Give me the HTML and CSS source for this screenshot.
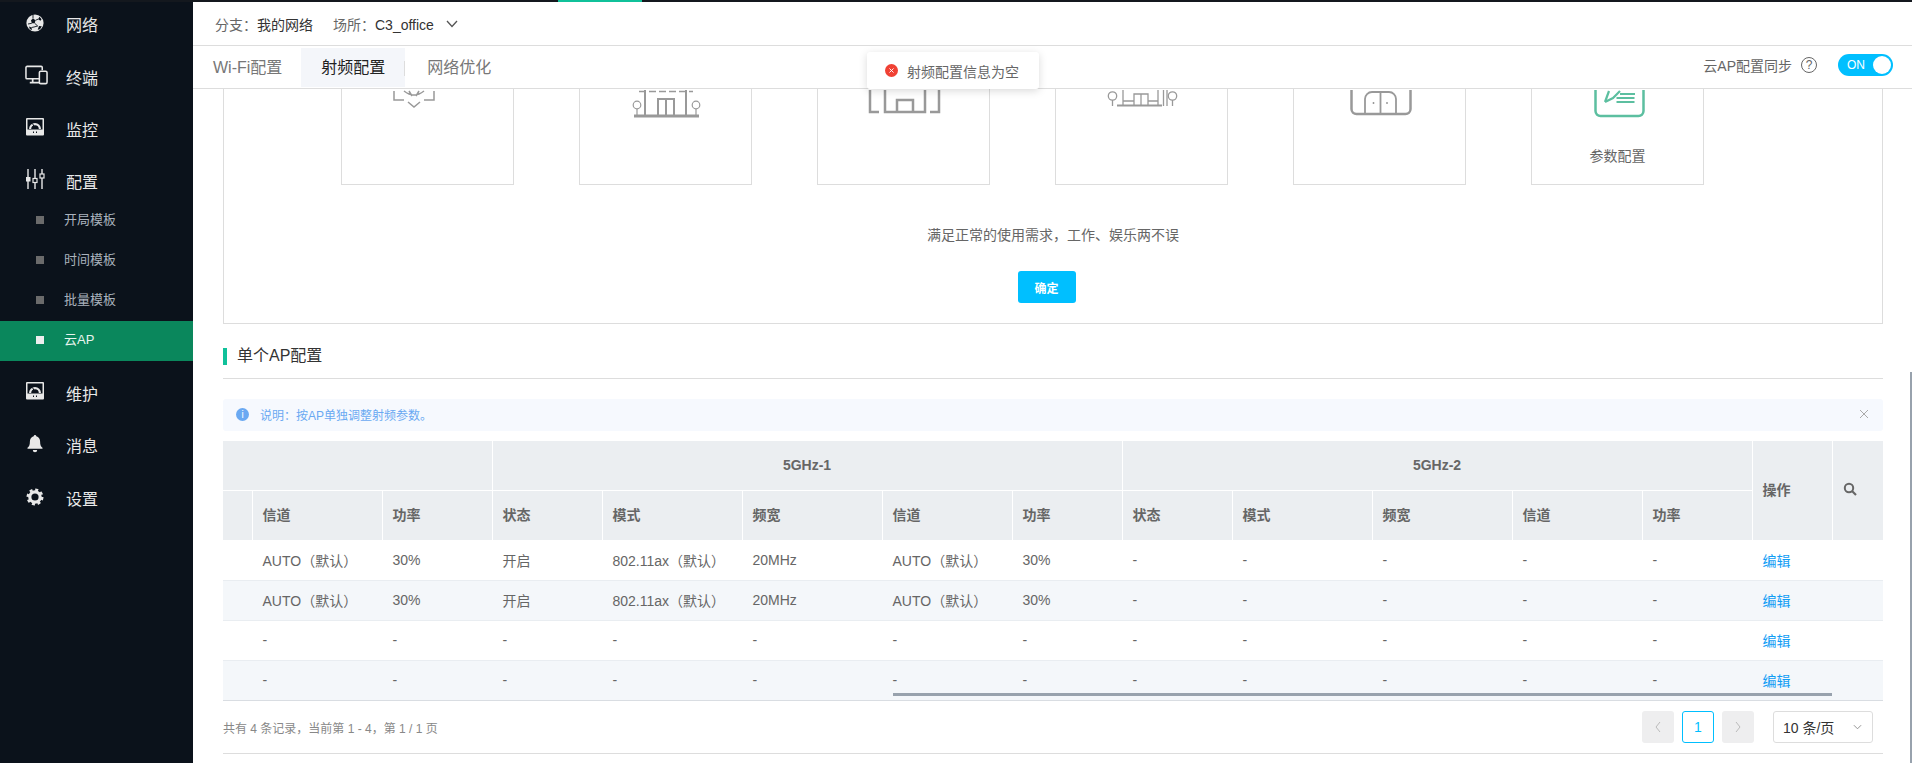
FILE: index.html
```html
<!DOCTYPE html>
<html lang="zh-CN">

<head>
    <meta charset="UTF-8">
    <title>云AP</title>
    <link rel="stylesheet" href="styles.css">
</head>

<body>
    <div class="topline"><span class="topline-mark"></span></div>

    <div class="app">
        <nav class="sidebar">
            <a class="nav-item first">
                <svg class="nav-icon lift-less" viewBox="0 0 18 18"><circle cx="9" cy="9" r="8.600" fill="#e8e8e8"/><path d="M7 4.500l2.500 1.800-.8 3H5.800L5 6.300zM13.500 2.800l2 2.400-1 1.500-2.500-1.500zM13 12l2.800.3-1.800 3-2.300.5zM3 12.500l2.500 1 .5 2.500-2.200-1z" fill="#0b121b"/><path d="M7 4.500V1M9.500 6.300L12 5.200M8.700 9.300l3 2.700M5.800 9.300L2 10M5.500 13.500l2.500-.5 3.700-1" fill="none" stroke="#0b121b" stroke-width=".9"/></svg>
                <span>网络</span>
            </a>
            <a class="nav-item">
                <svg class="nav-icon terminal" viewBox="0 0 24 20"><path d="M17 14H2.200A1.200 1.200 0 0 1 1 12.800V2.200A1.200 1.200 0 0 1 2.200 1h14.600A1.200 1.200 0 0 1 18 2.200V5" fill="none" stroke="#e8e8e8" stroke-width="1.600"/><path d="M8 14v3M5 18h10" stroke="#e8e8e8" stroke-width="1.800"/><rect x="15" y="6" width="8" height="13" rx="1.500" fill="#0b121b" stroke="#e8e8e8" stroke-width="1.600"/></svg>
                <span>终端</span>
            </a>
            <a class="nav-item">
                <svg class="nav-icon" viewBox="0 0 18 18"><use href="#gauge"/></svg>
                <span>监控</span>
            </a>
            <a class="nav-item">
                <svg class="nav-icon sliders" viewBox="0 0 20 20"><path d="M3 0v20M10 0v20M17 0v20" stroke="#e8e8e8" stroke-width="1.400"/><rect x="1" y="8" width="4.500" height="4.500" fill="#e8e8e8"/><rect x="8" y="9.500" width="4" height="4" fill="#0b121b" stroke="#e8e8e8" stroke-width="1.200"/><rect x="15" y="5" width="4" height="4" fill="#0b121b" stroke="#e8e8e8" stroke-width="1.200"/></svg>
                <span>配置</span>
            </a>
            <div class="subnav">
                <a class="sub-item"><i></i>开局模板</a>
                <a class="sub-item"><i></i>时间模板</a>
                <a class="sub-item"><i></i>批量模板</a>
                <a class="sub-item active"><i></i>云AP</a>
            </div>
            <a class="nav-item after-sub">
                <svg class="nav-icon" viewBox="0 0 18 18"><use href="#gauge"/></svg>
                <span>维护</span>
            </a>
            <a class="nav-item">
                <svg class="nav-icon lift-less" viewBox="0 0 18 18"><path d="M9 0a1.300 1.300 0 0 1 1.300 1.200c2.500.6 3.800 2.800 3.800 5.300 0 3.500.7 4.800 2.400 6.300v1h-15v-1c1.700-1.500 2.400-2.800 2.400-6.300 0-2.500 1.300-4.700 3.800-5.300A1.300 1.300 0 0 1 9 0zM6.800 15h4.400a2.200 2.200 0 0 1-4.400 0z" fill="#e8e8e8"/></svg>
                <span>消息</span>
            </a>
            <a class="nav-item">
                <svg class="nav-icon lift-less" viewBox="0 0 18 18"><circle cx="9" cy="9" r="5.200" fill="none" stroke="#e8e8e8" stroke-width="3.200"/><circle cx="9" cy="9" r="7.300" fill="none" stroke="#e8e8e8" stroke-width="2.400" stroke-dasharray="3 2.730"/></svg>
                <span>设置</span>
            </a>
        </nav>

        <main class="main">
            <div class="branchbar">
                <span class="crumb"><em>分支：</em>我的网络</span>
                <span class="crumb"><em>场所：</em>C3_office</span>
                <svg class="chevron" viewBox="0 0 12 8"><path d="M1 1l5 5.500L11 1" fill="none" stroke="#555" stroke-width="1.300"/></svg>
            </div>

            <div class="tabbar">
                <a class="tab">Wi-Fi配置</a>
                <a class="tab active">射频配置</a>
                <a class="tab">网络优化</a>
                <div class="sync">
                    <span>云AP配置同步</span>
                    <span class="help">?</span>
                    <span class="switch"><b>ON</b><i></i></span>
                </div>
            </div>

            <div class="content">
                <section class="panel">
                    <div class="cards">
                        <div class="card">
                            <svg class="card-icon shift" viewBox="0 0 100 64"><path d="M23 37v9h10M63 37v9H53M33 37q10 8 20 0M38 37l3 5M48 37l-3 5M37 48l6 5 6-5" fill="none" stroke="#999" stroke-width="1.500"/></svg>
                        </div>
                        <div class="card">
                            <svg class="card-icon" viewBox="0 0 100 64"><path d="M18 62h65" stroke="#999" stroke-width="3"/><path d="M29 36v25M70 36v25" stroke="#999" stroke-width="2"/><path d="M42 61V45h16v16M50 45v16" fill="none" stroke="#999" stroke-width="2"/><path d="M23 37.500h54" stroke="#999" stroke-width="1.500" stroke-dasharray="7 3"/><circle cx="21" cy="51" r="3.800" fill="none" stroke="#999" stroke-width="1.200"/><circle cx="80" cy="51" r="3.800" fill="none" stroke="#999" stroke-width="1.200"/><path d="M21 55v6M80 55v6" stroke="#999" stroke-width="1.200"/></svg>
                        </div>
                        <div class="card">
                            <svg class="card-icon" viewBox="0 0 100 64"><path d="M16 36v22h9M85 36v22h-9M31 36v22h40V36" fill="none" stroke="#999" stroke-width="2.500"/><path d="M43 58V46h16v12" fill="none" stroke="#999" stroke-width="2.500"/></svg>
                        </div>
                        <div class="card">
                            <svg class="card-icon" viewBox="0 0 100 64"><circle cx="20.500" cy="42" r="4.200" fill="none" stroke="#999" stroke-width="1.300"/><circle cx="80.500" cy="42" r="4.200" fill="none" stroke="#999" stroke-width="1.300"/><path d="M20.500 46v6M80.500 46v6M71.500 36v16M75 36v16" stroke="#999" stroke-width="1.300"/><path d="M25 51.500h45" stroke="#999" stroke-width="2"/><path d="M31 36v15M66 36v15M31 47h11M56 47h10M42 51V40h14v11M49 40v11" fill="none" stroke="#999" stroke-width="1.300"/></svg>
                        </div>
                        <div class="card">
                            <svg class="card-icon" viewBox="0 0 100 64"><path d="M21.500 36v19a5 5 0 0 0 5 5h49a5 5 0 0 0 5-5V36" fill="none" stroke="#999" stroke-width="2.500"/><path d="M35 60V45a7 7 0 0 1 7-7h17a7 7 0 0 1 7 7v15M50.500 38v22" fill="none" stroke="#999" stroke-width="1.800"/><path d="M43.500 48v2M57 48v2" stroke="#999" stroke-width="1.500"/></svg>
                        </div>
                        <div class="card">
                            <svg class="card-icon" viewBox="0 0 100 64"><path d="M27.500 36v21a5 5 0 0 0 5 5h38a5 5 0 0 0 5-5V36" fill="none" stroke="#5cbfa0" stroke-width="2.500"/><path d="M37 48l4-11M37 48l8-4 7-7" fill="none" stroke="#5cbfa0" stroke-width="2.200"/><path d="M52 40h15M48.500 44h18M48.500 48h18" stroke="#5cbfa0" stroke-width="1.800"/></svg>
                            <p class="card-label">参数配置</p>
                        </div>
                    </div>
                    <p class="panel-desc">满足正常的使用需求，工作、娱乐两不误</p>
                    <button class="confirm">确定</button>
                </section>

                <h2 class="heading">单个AP配置</h2>

                <div class="notice">
                    <span class="notice-icon">i</span>
                    <span class="notice-text">说明：按AP单独调整射频参数。</span>
                    <svg class="notice-close" viewBox="0 0 10 10"><path d="M1 1l8 8M9 1l-8 8" stroke="#aaa" stroke-width="1"/></svg>
                </div>

                <div class="table-wrap">
                    <table class="ap-table">
                        <colgroup>
                            <col class="w29"><col class="w130"><col class="w110">
                            <col class="w110"><col class="w140"><col class="w140"><col class="w130"><col class="w110">
                            <col class="w110"><col class="w140"><col class="w140"><col class="w130"><col class="w110">
                            <col class="w80"><col>
                        </colgroup>
                        <thead>
                            <tr>
                                <th colspan="3"></th>
                                <th colspan="5" class="group">5GHz-1</th>
                                <th colspan="5" class="group">5GHz-2</th>
                                <th rowspan="2">操作</th>
                                <th rowspan="2">
                                    <svg class="search" viewBox="0 0 14 14"><circle cx="6" cy="6" r="4.200" fill="none" stroke="#666" stroke-width="2"/><path d="M9 9l4 4" stroke="#666" stroke-width="2.200"/></svg>
                                </th>
                            </tr>
                            <tr>
                                <th></th><th>信道</th><th>功率</th>
                                <th>状态</th><th>模式</th><th>频宽</th><th>信道</th><th>功率</th>
                                <th>状态</th><th>模式</th><th>频宽</th><th>信道</th><th>功率</th>
                            </tr>
                        </thead>
                        <tbody>
                            <tr>
                                <td></td><td>AUTO（默认）</td><td>30%</td>
                                <td>开启</td><td>802.11ax（默认）</td><td>20MHz</td><td>AUTO（默认）</td><td>30%</td>
                                <td>-</td><td>-</td><td>-</td><td>-</td><td>-</td>
                                <td><a class="edit">编辑</a></td><td></td>
                            </tr>
                            <tr>
                                <td></td><td>AUTO（默认）</td><td>30%</td>
                                <td>开启</td><td>802.11ax（默认）</td><td>20MHz</td><td>AUTO（默认）</td><td>30%</td>
                                <td>-</td><td>-</td><td>-</td><td>-</td><td>-</td>
                                <td><a class="edit">编辑</a></td><td></td>
                            </tr>
                            <tr>
                                <td></td><td>-</td><td>-</td>
                                <td>-</td><td>-</td><td>-</td><td>-</td><td>-</td>
                                <td>-</td><td>-</td><td>-</td><td>-</td><td>-</td>
                                <td><a class="edit">编辑</a></td><td></td>
                            </tr>
                            <tr>
                                <td></td><td>-</td><td>-</td>
                                <td>-</td><td>-</td><td>-</td><td>-</td><td>-</td>
                                <td>-</td><td>-</td><td>-</td><td>-</td><td>-</td>
                                <td><a class="edit">编辑</a></td><td></td>
                            </tr>
                        </tbody>
                    </table>
                    <div class="table-scroll"></div>
                </div>

                <div class="pager">
                    <span class="pager-info">共有 4 条记录，当前第 1 - 4，第 1 / 1 页</span>
                    <div class="pager-controls">
                        <span class="page-btn off"><svg viewBox="0 0 8 12"><path d="M6 1L2 6l4 5" fill="none" stroke="#bbb" stroke-width="1"/></svg></span>
                        <span class="page-btn current">1</span>
                        <span class="page-btn off"><svg viewBox="0 0 8 12"><path d="M2 1l4 5-4 5" fill="none" stroke="#bbb" stroke-width="1"/></svg></span>
                        <span class="page-size">10 条/页<svg viewBox="0 0 10 6"><path d="M1 1l4 4 4-4" fill="none" stroke="#888" stroke-width="1"/></svg></span>
                    </div>
                </div>
            </div>
        </main>
    </div>

    <!-- these lie over the page -->
    <div class="toast">
        <svg class="toast-icon" viewBox="0 0 14 14"><circle cx="7" cy="7" r="7" fill="#f04134"/><path d="M4.800 4.800l4.400 4.400M9.200 4.800l-4.400 4.400" stroke="#fff" stroke-width="1"/></svg>
        <span>射频配置信息为空</span>
    </div>
    <div class="page-scroll"></div>

    <svg class="defs">
        <symbol id="gauge" viewBox="0 0 18 18">
            <rect x="0" y="0" width="18" height="17.500" rx="1" fill="#e8e8e8"/>
            <rect x="1.500" y="1.500" width="15" height="10" fill="#0b121b"/>
            <path d="M3 11a6 6 0 0 1 12 0h-2.200a3.800 3.800 0 0 0-7.600 0z" fill="#e8e8e8"/>
            <path d="M9 10.500L6.500 5.500" stroke="#0b121b" stroke-width="1"/>
            <path d="M7.500 13.500v1.500M10.500 13.500v1.500" stroke="#0b121b" stroke-width="1"/>
        </symbol>
    </svg>
</body>

</html>
```

FILE: styles.css
```css
* {
    box-sizing: border-box;
}

html,
body {
    height: 763px;
    margin: 0;
    overflow: hidden;
}

body {
    background-color: #fff;
    color: #666;
    font-family: "Liberation Sans", "Noto Sans CJK SC", sans-serif;
    font-size: 14px;
}

p,
h2 {
    margin: 0;
}

em {
    font-style: normal;
}

.topline {
    height: 2px;
    background-color: #14181e;
    padding-left: 558px;
}

.topline-mark {
    display: block;
    width: 84px;
    height: 2px;
    background-color: #10c19a;
}

.app {
    display: flex;
    height: 761px;
}

/* sidebar */
.sidebar {
    width: 193px;
    flex: none;
    background-color: #0b121b;
    color: #e8e8e8;
}

.nav-item {
    display: flex;
    align-items: center;
    height: 52.4px;
    padding-left: 26px;
    font-size: 16px;
}

.nav-item.first {
    margin-top: -4px;
}

.nav-item.after-sub {
    margin-top: 6px;
}

.nav-icon {
    width: 18px;
    height: 18px;
    margin-right: 22px;
    margin-bottom: 4px;
    flex: none;
}

.nav-icon.lift-less {
    margin-bottom: 2px;
}

.nav-icon.terminal {
    width: 23px;
    height: 20px;
    margin-left: -1px;
    margin-right: 18px;
}

.nav-icon.sliders {
    width: 20px;
    height: 20px;
    margin-left: -1px;
    margin-right: 21px;
}

.subnav {
    margin-top: -7px;
}

.sub-item {
    display: flex;
    align-items: center;
    height: 40px;
    padding-left: 36px;
    padding-bottom: 5px;
    font-size: 13px;
    color: #aab2bd;
}

.sub-item i {
    width: 8px;
    height: 8px;
    margin-right: 20px;
    margin-top: 3px;
    background-color: #6b6b6b;
}

.sub-item.active {
    background-color: #0a875c;
    color: #e8f4ee;
}

.sub-item.active i {
    background-color: #eee;
}

/* top bars */
.main {
    flex: 1;
    min-width: 0;
    display: flex;
    flex-direction: column;
}

.branchbar {
    display: flex;
    align-items: center;
    height: 44px;
    padding-left: 22px;
    border-bottom: 1px solid #ddd;
    color: #333;
}

.crumb {
    margin-right: 20px;
    font-size: 14px;
}

.crumb em {
    color: #666;
}

.chevron {
    width: 12px;
    height: 8px;
    margin-left: -8px;
    margin-top: 1px;
}

.tabbar {
    display: flex;
    align-items: center;
    height: 43px;
    padding-left: 20px;
    padding-right: 19px;
    border-bottom: 1px solid #ddd;
    font-size: 16px;
}

.tab {
    position: relative;
    height: 39px;
    line-height: 40px;
    padding-right: 20px;
    color: #777;
}

.tab.active {
    width: 104px;
    padding: 0 20px;
    margin-left: -1px;
    background-color: #f4f6fa;
    color: #222;
}

.tab.active + .tab {
    padding-left: 22px;
}

.tab.active::after,
.tab:first-child::after {
    content: "";
    position: absolute;
    right: 0;
    top: 13px;
    width: 1px;
    height: 15px;
    background-color: #ddd;
}

.sync {
    display: flex;
    align-items: center;
    margin-left: auto;
    margin-bottom: 4px;
    font-size: 14px;
    color: #666;
}

.help {
    width: 16px;
    height: 16px;
    margin-left: 9px;
    border: 1px solid #666;
    border-radius: 50%;
    font-size: 12px;
    line-height: 14px;
    text-align: center;
}

.switch {
    display: flex;
    align-items: center;
    justify-content: space-between;
    width: 55px;
    height: 22px;
    margin-left: 21px;
    padding: 0 2px 0 9px;
    border-radius: 11px;
    background-color: #00bfff;
    color: #fff;
    font-size: 12px;
}

.switch b {
    font-weight: normal;
}

.switch i {
    width: 18px;
    height: 18px;
    border-radius: 50%;
    background-color: #fff;
}

/* config panel, scrolled up under the bars */
.content {
    flex: 1;
    overflow: hidden;
    padding: 0 29px 0 30px;
}

.panel {
    height: 302px;
    margin-top: -67px;
    padding-top: 20px;
    border: 1px solid #ddd;
    text-align: center;
}

.cards {
    display: flex;
    gap: 65px;
    padding-left: 117px;
}

.card {
    width: 173px;
    height: 142px;
    padding-top: 10px;
    border: 1px solid #ddd;
}

.card-icon {
    display: block;
    width: 100px;
    height: 64px;
    margin: 0 auto;
}

.card-icon.shift {
    margin-left: 29px;
}

.card-label {
    margin-top: 28px;
    font-size: 14px;
    line-height: 20px;
}

.panel-desc {
    margin-top: 40px;
    line-height: 20px;
}

.confirm {
    width: 58px;
    height: 32px;
    margin-top: 26px;
    margin-right: 13px;
    border: 0;
    border-radius: 3px;
    background-color: #00bfff;
    color: #fff;
    font-family: inherit;
    font-size: 12px;
    font-weight: bold;
}

.heading {
    height: 17px;
    margin-top: 24px;
    padding-left: 10px;
    border-left: 4px solid #10c19a;
    color: #333;
    font-size: 16px;
    font-weight: normal;
    line-height: 16px;
}

.notice {
    display: flex;
    align-items: center;
    height: 32px;
    margin-top: 34px;
    padding: 0 14px 2px 13px;
    border-radius: 3px;
    background-color: #f6f9fe;
    color: #6aa9f2;
    font-size: 12px;
    position: relative;
}

.notice::before {
    content: "";
    position: absolute;
    left: 0;
    right: 0;
    top: -21px;
    border-top: 1px solid #ddd;
}

.notice-icon {
    width: 13px;
    height: 13px;
    margin-right: 11px;
    border-radius: 50%;
    background-color: #6aa9f2;
    color: #fff;
    font-size: 10px;
    line-height: 13px;
    text-align: center;
}

.notice-close {
    width: 10px;
    height: 10px;
    margin-left: auto;
}

/* table */
.table-wrap {
    position: relative;
    margin-top: 10px;
    border-bottom: 1px solid #d9dde2;
}

.ap-table {
    width: 100%;
    table-layout: fixed;
    border-collapse: collapse;
}

.w29 { width: 29px; }
.w80 { width: 80px; }
.w110 { width: 110px; }
.w130 { width: 130px; }
.w140 { width: 140px; }

.ap-table th {
    height: 49.5px;
    padding: 0 0 2px 10px;
    border: 1px solid #fff;
    border-top: 0;
    background-color: #ebeef1;
    color: #666;
    font-weight: bold;
    text-align: left;
}

.ap-table th:first-child {
    border-left: 0;
}

.ap-table th:last-child {
    border-right: 0;
}

.ap-table th.group {
    padding: 0 0 2px;
    text-align: center;
}

.ap-table td {
    height: 40px;
    padding: 0 0 0 10.5px;
    border-bottom: 1px solid #e9edf1;
    white-space: nowrap;
}

.ap-table tbody tr:nth-child(even) td {
    background-color: #f4f7fa;
}

.ap-table tbody tr:last-child td {
    border-bottom: 0;
}

.edit {
    color: #0f9df5;
}

.search {
    display: block;
    width: 14px;
    height: 14px;
}

.table-scroll {
    position: absolute;
    left: 670px;
    right: 51px;
    bottom: 4px;
    height: 3px;
    background-color: #98a2ad;
}

/* pagination */
.pager {
    display: flex;
    align-items: center;
    height: 53px;
    border-bottom: 1px solid #ddd;
    font-size: 12px;
    color: #888;
}

.pager-controls {
    display: flex;
    align-items: center;
    margin-left: auto;
    margin-right: 10px;
}

.page-btn {
    display: flex;
    align-items: center;
    justify-content: center;
    width: 32px;
    height: 32px;
    margin-right: 8px;
    border-radius: 3px;
    font-size: 14px;
}

.page-btn.off {
    background-color: #eeeeef;
}

.page-btn svg {
    width: 8px;
    height: 12px;
}

.page-btn.current {
    border: 1px solid #00bfff;
    color: #00bfff;
}

.page-size {
    display: flex;
    align-items: center;
    justify-content: space-between;
    width: 100px;
    height: 32px;
    margin-left: 11px;
    padding: 0 10px 0 9px;
    border: 1px solid #ddd;
    border-radius: 3px;
    color: #333;
    font-size: 14px;
}

.page-size svg {
    width: 9px;
    height: 6px;
}

/* over the page */
.toast {
    position: absolute;
    left: 867px;
    top: 52px;
    display: flex;
    align-items: center;
    width: 172px;
    height: 37px;
    padding-left: 18px;
    border-radius: 3px;
    background-color: #fff;
    box-shadow: 0 2px 8px rgba(0, 0, 0, 0.15);
}

.toast-icon {
    width: 13px;
    height: 13px;
    margin-right: 9px;
}

.page-scroll {
    position: absolute;
    right: 0;
    top: 372px;
    bottom: 0;
    width: 2px;
    background-color: #98a2ad;
}

.defs {
    position: absolute;
    width: 0;
    height: 0;
}
```
